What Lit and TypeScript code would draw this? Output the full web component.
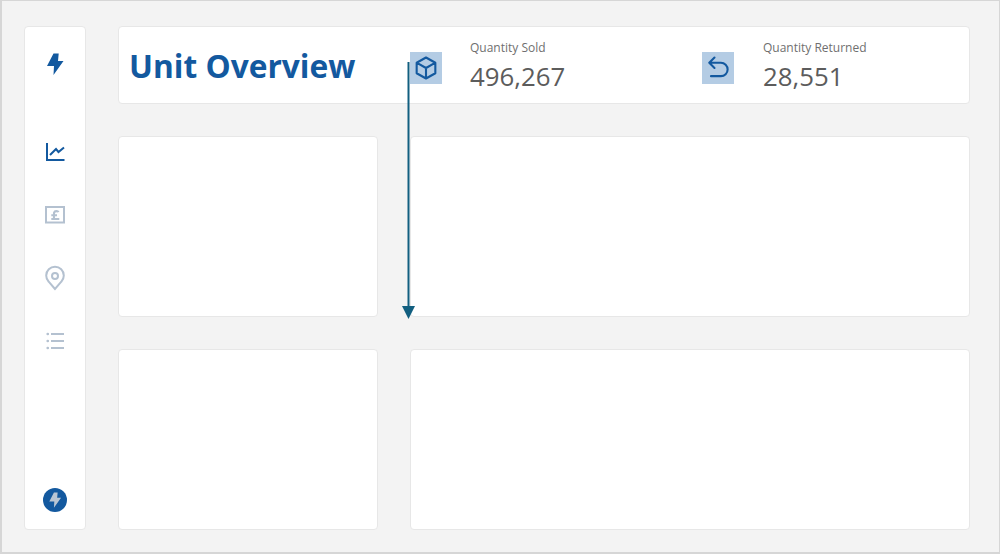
import { LitElement, html, css } from "lit";
import { customElement } from "lit/decorators.js";

@customElement("app-root")
export class AppRoot extends LitElement {
  static styles = css`
    :host { display: block; width: 1000px; height: 554px; }
    .page {
      position: relative; box-sizing: border-box; width: 1000px; height: 554px;
      background: #f3f3f3; border-style: solid; border-color: #d6d6d6; border-width: 1px 1px 2px 2px;
      padding: 25px 29px 22px 22px; display: flex; gap: 32px;
      font-family: "Open Sans", "Noto Sans", sans-serif;
    }
    .card { background: #fff; border: 1px solid #e7e7e7; border-radius: 4px; box-sizing: border-box; }
    .side { width: 62px; flex: none; display: flex; flex-direction: column; align-items: center; padding-top: 23px; padding-bottom: 17px; }
    .side svg { display: block; }
    .nav { margin-top: 60px; display: flex; flex-direction: column; gap: 35px; align-items: center; }
    .logo { width: 28px; height: 28px; }
    .nav svg { width: 28px; height: 28px; fill: none; stroke-width: 2; stroke: #b4c1d0; }
    .nav svg.on { stroke: #13599f; }
    .avatar { margin-top: auto; width: 24px; height: 24px; border-radius: 50%; background: #13599f; display: flex; align-items: center; justify-content: center; }
    .avatar svg { width: 20px; height: 20px; }
    .main { flex: 1; display: flex; flex-direction: column; gap: 32px; min-width: 0; }
    .head { height: 78px; display: flex; align-items: center; padding: 1px 0 0 10px; flex: none; }
    h1 { margin: 0; width: 281px; flex: none; font-size: 31.7px; font-weight: 700; color: #13599f; line-height: 1; }
    .kpi { display: flex; align-items: center; }
    .kpi.a { width: 292px; }
    .tile { width: 32px; height: 32px; margin-top: 5px; margin-right: 28px; background: #b4cce4; display: flex; align-items: center; justify-content: center; flex: none; }
    .tile svg { width: 28px; height: 28px; fill: none; stroke: #13599f; stroke-width: 1.800; stroke-linejoin: round; stroke-linecap: round; }
    .kpi.b .tile { margin-right: 29px; }
    .label { font-size: 12px; color: #6f6f6f; line-height: 16px; }
    .value { font-size: 25.8px; color: #5c5c5c; line-height: 30px; margin-top: 5px; }
    .row { display: flex; gap: 32px; height: 181px; flex: none; }
    .row .s { width: 260px; flex: none; }
    .row .l { flex: 1; }
    .arrow { position: absolute; left: 400px; top: 61px; width: 13px; height: 258px; }
  `;

  render() {
    const boltPath = "M12.500 3.500h5.200L17 11h5.500L12.500 25l.5-9H6z";
    return html`<div class="page">
      <div class="card side">
        <svg class="logo" viewBox="0 0 28 28"><path d="${boltPath}" fill="#13599f"></path></svg>
        <div class="nav">
          <svg class="on" viewBox="0 0 28 28"><path d="M6 5v17h17.500M9 17l6-6 2.500 3L23 9.500"></path></svg>
          <svg viewBox="0 0 28 28"><rect x="5" y="6" width="18" height="15.500"></rect><path stroke-width="2.100" d="M17.500 11.200c-.6-1.400-3.800-1.600-4.400.4-.4 1.400.5 3-.4 6M10.300 14.200h5.700M10.300 18h8"></path></svg>
          <svg viewBox="0 0 28 28"><path d="M14 25l-6.300-7.300a8.800 8.800 0 1 1 12.600 0z"></path><circle cx="14" cy="12" r="3"></circle></svg>
          <svg viewBox="0 0 28 28"><path d="M10 7h13M10 14h13M10 21h13"></path><path stroke-linecap="round" stroke-width="2.600" d="M6.700 7h.1M6.700 14h.1M6.700 21h.1"></path></svg>
        </div>
        <div class="avatar"><svg viewBox="0 0 28 28"><path d="${boltPath}" fill="#b9c6d4"></path></svg></div>
      </div>
      <div class="main">
        <div class="card head">
          <h1>Unit Overview</h1>
          <div class="kpi a">
            <div class="tile"><svg viewBox="0 0 24 24"><path d="M12 3l8 4.500v9L12 21l-8-4.500v-9zM4.300 7.600 12 12l7.700-4.400M12 12v9"></path></svg></div>
            <div><div class="label">Quantity Sold</div><div class="value">496,267</div></div>
          </div>
          <div class="kpi b">
            <div class="tile"><svg viewBox="0 0 24 24"><path d="M9 3 4.500 7.500 9 12M5 7.500h9.500a5.500 5.500 0 0 1 0 11.500H6"></path></svg></div>
            <div><div class="label">Quantity Returned</div><div class="value">28,551</div></div>
          </div>
        </div>
        <div class="row"><div class="card s"></div><div class="card l"></div></div>
        <div class="row"><div class="card s"></div><div class="card l"></div></div>
      </div>
      <svg class="arrow" viewBox="0 0 13 258"><path d="M6.500 0v246" stroke="#125f80" stroke-width="2"></path><path d="M0 244h13l-6.500 13z" fill="#125f80"></path></svg>
    </div>`;
  }
}
